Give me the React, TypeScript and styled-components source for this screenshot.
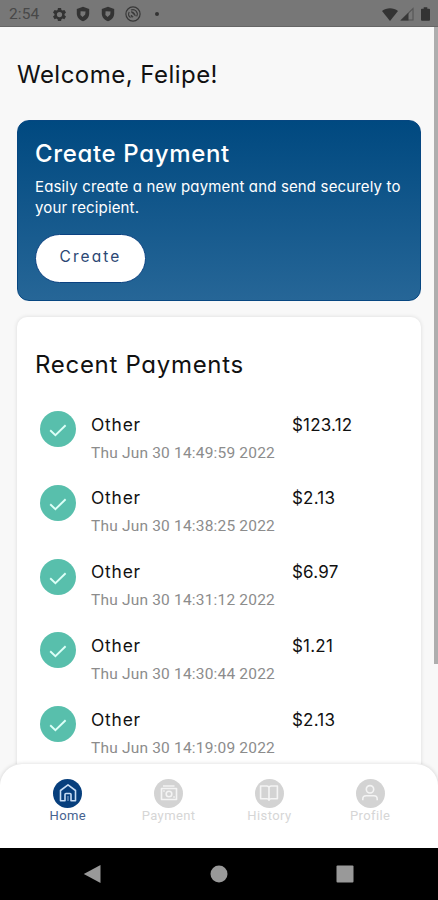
import React from 'react';
import styled, { createGlobalStyle } from 'styled-components';

const Global = createGlobalStyle`
  * { box-sizing: border-box; margin: 0; padding: 0; }
  body { background: #f8f8f8; font-family: Inter, sans-serif; font-feature-settings: "cv11"; color: #111; }
  svg { display: block; }
`;

const Screen = styled.div`
  width: 438px;
  height: 900px;
  display: flex;
  flex-direction: column;
  overflow: hidden;
`;

const StatusBar = styled.header`
  height: 27px;
  flex: none;
  display: flex;
  align-items: center;
  padding: 2px 7px 0 9px;
  background: #777;
  border-bottom: 1px solid #666;
`;
const Clock = styled.span`
  width: 42.5px;
  font: 400 15.5px/20px Roboto, sans-serif;
  letter-spacing: 0.1px;
  color: #484848;
`;
const Notifications = styled.div`
  display: flex;
  align-items: center;
  gap: 8.8px;
  flex: 1;
`;
const Dot = styled.i`
  width: 4px;
  height: 4px;
  margin-left: 5px;
  border-radius: 50%;
  background: #333;
`;
const Signals = styled.div`
  display: flex;
  align-items: center;
  gap: 2px;
  svg:last-child {
    margin: 0 1px 0 5px;
  }
`;

const Content = styled.main`
  height: 737px;
  flex: none;
  display: flex;
  overflow: hidden;
`;
const Scroller = styled.div`
  width: 434px;
  padding: 0 13px 0 17px;
  display: flex;
  flex-direction: column;
`;
const ScrollThumb = styled.div`
  width: 4px;
  height: 637px;
  background: #aeaeae;
`;

const Welcome = styled.h1`
  height: 92.5px;
  flex: none;
  padding-top: 30px;
  font-size: 24px;
  font-weight: 400;
  line-height: 36px;
  letter-spacing: 0.47px;
`;

const CreateCard = styled.section`
  height: 181px;
  flex: none;
  padding: 17px 17px;
  border-radius: 12px;
  border: 1px solid #074781;
  background: linear-gradient(#004980, #266697);
  color: #fff;
`;
const CardTitle = styled.h2`
  font-size: 24px;
  font-weight: 500;
  line-height: 32px;
  letter-spacing: 0.65px;
`;
const CardText = styled.p`
  margin-top: 6.5px;
  font-size: 15px;
  line-height: 21px;
  letter-spacing: 0.15px;
  white-space: nowrap;
`;
const CreateButton = styled.button`
  display: block;
  width: 111px;
  height: 49px;
  margin-top: 15.5px;
  padding-bottom: 3px;
  border: 1px solid #0b4281;
  border-radius: 25px;
  background: #fff;
  color: #2b4774;
  font: inherit;
  font-size: 15.5px;
  letter-spacing: 2.1px;
`;

const PaymentsCard = styled.section`
  flex: none;
  height: 520px;
  margin-top: 16px;
  padding: 32px 18px 0;
  border-radius: 10px;
  background: #fff;
  box-shadow: 0 0 4px rgba(0, 0, 0, 0.12);
`;
const SectionTitle = styled.h2`
  margin-bottom: 30px;
  font-size: 24px;
  font-weight: 400;
  line-height: 32px;
  letter-spacing: 0.7px;
`;
const PaymentRow = styled.article`
  height: 73.8px;
  display: grid;
  grid-template-columns: 56px 201px 1fr;
`;
const CheckBadge = styled.span`
  width: 36px;
  height: 36px;
  margin: 0.5px 0 0 5px;
  display: grid;
  place-items: center;
  border-radius: 50%;
  background: #58bfac;
`;
const PayeeName = styled.div`
  font-size: 17.4px;
  line-height: 28px;
  letter-spacing: 0.8px;
`;
const PayDate = styled.time`
  display: block;
  font: 400 15.5px/28px Roboto, sans-serif;
  letter-spacing: 0.19px;
  color: #8c8c8c;
`;
const Amount = styled.div`
  font-size: 17px;
  line-height: 28px;
  letter-spacing: 0.2px;
`;

const TabBar = styled.nav`
  position: relative;
  height: 84px;
  flex: none;
  display: grid;
  grid-template-columns: repeat(4, 100.8px);
  justify-content: center;
  padding-top: 14.5px;
  border-radius: 22px 22px 0 0;
  background: #fff;
  box-shadow: 0 0 4px rgba(0, 0, 0, 0.16);
`;
const Tab = styled.a<{ $active?: boolean }>`
  display: flex;
  flex-direction: column;
  align-items: center;
  font: 400 13px/16px Roboto, sans-serif;
  letter-spacing: 0.4px;
  color: ${p => (p.$active ? '#466390' : '#d6d6d6')};
`;
const TabIcon = styled.span<{ $active?: boolean }>`
  width: 29px;
  height: 29px;
  display: grid;
  place-items: center;
  border-radius: 50%;
  color: ${p => (p.$active ? '#c9def5' : '#f4f4f4')};
  background: ${p => (p.$active ? '#073f7d' : '#d3d3d3')};
`;

const SystemBar = styled.footer`
  height: 52px;
  flex: none;
  display: flex;
  justify-content: space-between;
  align-items: center;
  padding: 0 84px 0 83px;
  background: #000;
`;

const GearIcon = () => (
  <svg width="15" height="15" viewBox="0 0 24 24" fill="#333">
    <path
      fillRule="evenodd"
      d="M9.5 1.500h5l.6 3.100 1.800 1 3-1 2.500 4.300-2.400 2.100v2l2.400 2.100-2.500 4.300-3-1-1.800 1-.6 3.100h-5l-.6-3.100-1.800-1-3 1-2.500-4.300L4 13v-2L1.600 8.900l2.500-4.300 3 1 1.800-1zM12 7.800a4.200 4.200 0 1 0 0 8.400 4.200 4.200 0 0 0 0-8.400z"
    />
  </svg>
);

const ShieldIcon = () => (
  <svg width="16" height="16" viewBox="0 0 16 16">
    <path d="M8 .8 14.200 3v4.400c0 3.700-2.500 6.500-6.200 7.800C4.300 13.900 1.800 11.100 1.800 7.400V3z" fill="#333" />
    <path d="M5.600 5.200l5 .4-.4 3L7.600 11 5.400 9z" fill="#777" />
  </svg>
);

const SyncIcon = () => (
  <svg width="16" height="16" viewBox="0 0 16 16" fill="none" stroke="#383838">
    <circle cx="8" cy="8" r="7.100" strokeWidth="1.200" />
    <path d="M5.500 11.600A4.400 4.400 0 0 1 4.200 6M6 4.100A4.400 4.400 0 0 1 11.600 10.400" strokeWidth="1.100" />
    <path d="M6 5.700q3.600-.2 4.400 4.300z" fill="#383838" strokeWidth=".6" />
    <path d="M6.300 9l1.800 1.900H6.300z" strokeWidth="1" />
  </svg>
);

const WifiIcon = () => (
  <svg width="16" height="13" viewBox="0 0 16 13">
    <path d="M0 3C4.500-.8 11.500-.8 16 3L8 13z" fill="#333" />
  </svg>
);

const SignalIcon = () => (
  <svg width="14" height="14" viewBox="0 0 14 14">
    <path d="M13 1.500V13H1.200z" fill="#777" stroke="#555" strokeWidth="1.100" />
    <path d="M8.500 5.700V13.500H.5z" fill="#383838" />
  </svg>
);

const BatteryIcon = () => (
  <svg width="9" height="14" viewBox="0 0 10 15">
    <path d="M3 0h4v1.600h2q1 0 1 1V14q0 1-1 1H1q-1 0-1-1V2.600q0-1 1-1h2z" fill="#333" />
  </svg>
);

const CheckIcon = () => (
  <svg width="20" height="16" viewBox="0 0 20 16" fill="none" stroke="#dcfff7" strokeWidth="1.900">
    <path d="M2.200 9.200 7.400 14.200 17.600 4.200" />
  </svg>
);

const LineIcon = styled.svg`
  width: 20px;
  height: 20px;
  fill: none;
  stroke: currentColor;
  stroke-width: 1.6px;
  stroke-linejoin: round;
`;

const HomeIcon = () => (
  <LineIcon viewBox="0 0 20 20">
    <path d="M2.500 7.500 10 1.900l7.500 5.600v10.300h-4.500V11.500q0-1-1-1h-4q-1 0-1 1v6.300H2.500z" />
    <path d="M10 13v5" opacity=".45" />
  </LineIcon>
);

const PaymentIcon = () => (
  <LineIcon viewBox="0 0 20 20">
    <path d="M2.500 5.500h15v11h-15zM4 3h11.500" />
    <circle cx="10" cy="11" r="2.800" />
    <path d="M4.200 8h1.500M14.300 14h1.500" />
  </LineIcon>
);

const HistoryIcon = () => (
  <LineIcon viewBox="0 0 20 20">
    <path d="M10 4.200Q9 3 7.500 3H1.600v12.800H8q1.500 0 2 1.400.5-1.400 2-1.400h6.400V3h-5.900Q11 3 10 4.200zM10 4.200v13" />
  </LineIcon>
);

const ProfileIcon = () => (
  <LineIcon viewBox="0 0 20 20">
    <circle cx="10" cy="6.300" r="3.700" />
    <path d="M2.800 17.200v-1.200q0-3.200 3.400-3.200h7.600q3.400 0 3.400 3.200v1.200" />
  </LineIcon>
);

const payments = [
  ['Thu Jun 30 14:49:59 2022', '$123.12'],
  ['Thu Jun 30 14:38:25 2022', '$2.13'],
  ['Thu Jun 30 14:31:12 2022', '$6.97'],
  ['Thu Jun 30 14:30:44 2022', '$1.21'],
  ['Thu Jun 30 14:19:09 2022', '$2.13'],
];

const tabs = [
  { label: 'Home', Icon: HomeIcon, active: true },
  { label: 'Payment', Icon: PaymentIcon },
  { label: 'History', Icon: HistoryIcon },
  { label: 'Profile', Icon: ProfileIcon },
];

export default function App() {
  return (
    <Screen>
      <Global />
      <StatusBar>
        <Clock>2:54</Clock>
        <Notifications>
          <GearIcon />
          <ShieldIcon />
          <ShieldIcon />
          <SyncIcon />
          <Dot />
        </Notifications>
        <Signals>
          <WifiIcon />
          <SignalIcon />
          <BatteryIcon />
        </Signals>
      </StatusBar>
      <Content>
        <Scroller>
          <Welcome>Welcome, Felipe!</Welcome>
          <CreateCard>
            <CardTitle>Create Payment</CardTitle>
            <CardText>
              Easily create a new payment and send securely to
              <br />
              your recipient.
            </CardText>
            <CreateButton>Create</CreateButton>
          </CreateCard>
          <PaymentsCard>
            <SectionTitle>Recent Payments</SectionTitle>
            {payments.map(([date, amount]) => (
              <PaymentRow key={date}>
                <CheckBadge>
                  <CheckIcon />
                </CheckBadge>
                <div>
                  <PayeeName>Other</PayeeName>
                  <PayDate>{date}</PayDate>
                </div>
                <Amount>{amount}</Amount>
              </PaymentRow>
            ))}
          </PaymentsCard>
        </Scroller>
        <ScrollThumb />
      </Content>
      <TabBar>
        {tabs.map(({ label, Icon, active }) => (
          <Tab key={label} $active={active}>
            <TabIcon $active={active}>
              <Icon />
            </TabIcon>
            {label}
          </Tab>
        ))}
      </TabBar>
      <SystemBar>
        <svg width="18" height="20" viewBox="0 0 18 20">
          <path d="M17.500 1v18L.8 10z" fill="#999" />
        </svg>
        <svg width="18" height="18" viewBox="0 0 18 18">
          <circle cx="9" cy="9" r="8.500" fill="#999" />
        </svg>
        <svg width="18" height="18" viewBox="0 0 18 18">
          <rect x=".5" y=".5" width="17" height="17" rx="1" fill="#999" />
        </svg>
      </SystemBar>
    </Screen>
  );
}
